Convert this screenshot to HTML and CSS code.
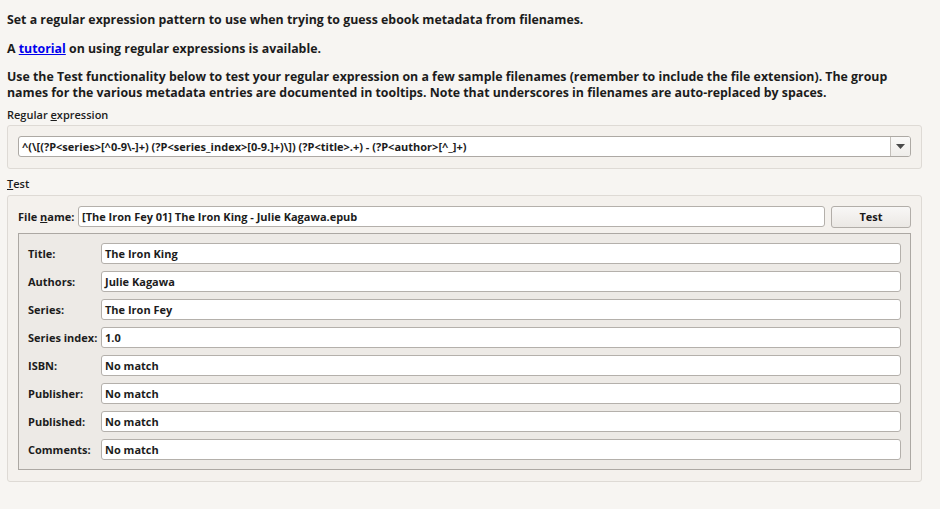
FILE: index.html
```html
<!DOCTYPE html>
<html>
<head>
<meta charset="utf-8">
<link rel="stylesheet" href="styles.css">
</head>
<body>
<div class="page">
  <p class="intro l1">Set a regular expression pattern to use when trying to guess ebook metadata from filenames.</p>
  <p class="intro l2">A <a href="#" class="link">tutorial</a> on using regular expressions is available.</p>
  <p class="intro l3">Use the Test functionality below to test your regular expression on a few sample filenames (remember to include the file extension). The group names for the various metadata entries are documented in tooltips. Note that underscores in filenames are auto-replaced by spaces.</p>
  <div class="glabel">Regular <u>e</u>xpression</div>
  <div class="group g1">
    <div class="combo">
      <div class="combo-text">^(\[(?P&lt;series&gt;[^0-9\-]+) (?P&lt;series_index&gt;[0-9.]+)\]) (?P&lt;title&gt;.+) - (?P&lt;author&gt;[^_]+)</div>
      <div class="combo-btn"><svg width="9" height="5" viewBox="0 0 9 5"><path d="M0 0H9L4.5 5Z" fill="#4a4a4a"/></svg></div>
    </div>
  </div>
  <div class="glabel test-label"><u>T</u>est</div>
  <div class="group g2">
    <div class="fname-row">
      <span class="flabel">File <u>n</u>ame:</span>
      <div class="input finput">[The Iron Fey 01] The Iron King - Julie Kagawa.epub</div>
      <button class="btn">Test</button>
    </div>
    <div class="results">
      <div class="row"><span class="rlabel">Title:</span><div class="input rinput">The Iron King</div></div>
      <div class="row"><span class="rlabel">Authors:</span><div class="input rinput">Julie Kagawa</div></div>
      <div class="row"><span class="rlabel">Series:</span><div class="input rinput">The Iron Fey</div></div>
      <div class="row"><span class="rlabel">Series index:</span><div class="input rinput">1.0</div></div>
      <div class="row"><span class="rlabel">ISBN:</span><div class="input rinput">No match</div></div>
      <div class="row"><span class="rlabel">Publisher:</span><div class="input rinput">No match</div></div>
      <div class="row"><span class="rlabel">Published:</span><div class="input rinput">No match</div></div>
      <div class="row"><span class="rlabel">Comments:</span><div class="input rinput">No match</div></div>
    </div>
  </div>
</div>
</body>
</html>
```
FILE: styles.css
```css
html, body {
  margin: 0;
  padding: 0;
  background: #f7f5f2;
}
body {
  font-family: "Open Sans", "DejaVu Sans", sans-serif;
  color: #1c1c1c;
  width: 940px;
  height: 509px;
  overflow: hidden;
}
.page {
  padding: 12px 18px 0 7px;
}
.intro {
  margin: 0;
  font-size: 12.35px;
  font-weight: 700;
  line-height: 16px;
}
.l2 { margin-top: 13px; }
.l3 { margin-top: 12px; }
.link {
  color: #0000ee;
  text-decoration: underline;
}
.glabel {
  font-size: 11px;
  font-weight: 600;
  line-height: 14px;
  margin-top: 7px;
  white-space: nowrap;
}
.glabel u { text-decoration: underline; }
.group {
  border: 1px solid #dedad5;
  border-radius: 3px;
  background: #f4f1ed;
}
.g1 {
  margin-top: 3px;
  padding: 10px 10px 11px 10px;
}
.combo {
  display: flex;
  height: 21px;
  border: 1px solid #ada9a4;
  border-radius: 3px;
  background: #fff;
  box-sizing: border-box;
}
.combo-text {
  flex: 1;
  font-size: 11px;
  font-weight: 700;
  line-height: 19px;
  padding-left: 3px;
  white-space: nowrap;
  overflow: hidden;
}
.combo-btn {
  width: 19px;
  border-left: 1px solid #c3bfba;
  background: linear-gradient(#faf9f8, #efedea);
  display: flex;
  align-items: center;
  justify-content: center;
  border-radius: 0 2px 2px 0;
}
.test-label {
  margin-top: 8px;
}
.g2 {
  margin-top: 4px;
  padding: 10px 10px 10px 10px;
  height: 265px;
}
.fname-row {
  display: flex;
  align-items: center;
  height: 21px;
}
.flabel {
  font-size: 11px;
  font-weight: 700;
  width: 60px;
  white-space: nowrap;
}
.input {
  background: #fff;
  border: 1px solid #b4b0ab;
  border-radius: 3px;
  box-sizing: border-box;
  height: 21px;
  font-size: 11px;
  font-weight: 700;
  line-height: 19px;
  padding-left: 3px;
  white-space: nowrap;
}
.finput {
  flex: 1;
}
.btn {
  margin-left: 6px;
  width: 80px;
  height: 22px;
  border: 1px solid #b2aea9;
  border-radius: 3px;
  background: linear-gradient(#f8f7f6, #ebe8e4);
  font-family: inherit;
  font-size: 11px;
  font-weight: 700;
  color: #1a1a1a;
  padding: 0;
}
.results {
  margin-top: 6px;
  border: 1px solid #aca8a3;
  background: #edeae6;
  padding: 9px 9px 9px 9px;
  display: flex;
  flex-direction: column;
  gap: 7px;
}
.row {
  display: flex;
  align-items: center;
}
.rlabel {
  width: 73px;
  font-size: 11px;
  font-weight: 700;
  white-space: nowrap;
}
.rinput {
  flex: 1;
}
```
